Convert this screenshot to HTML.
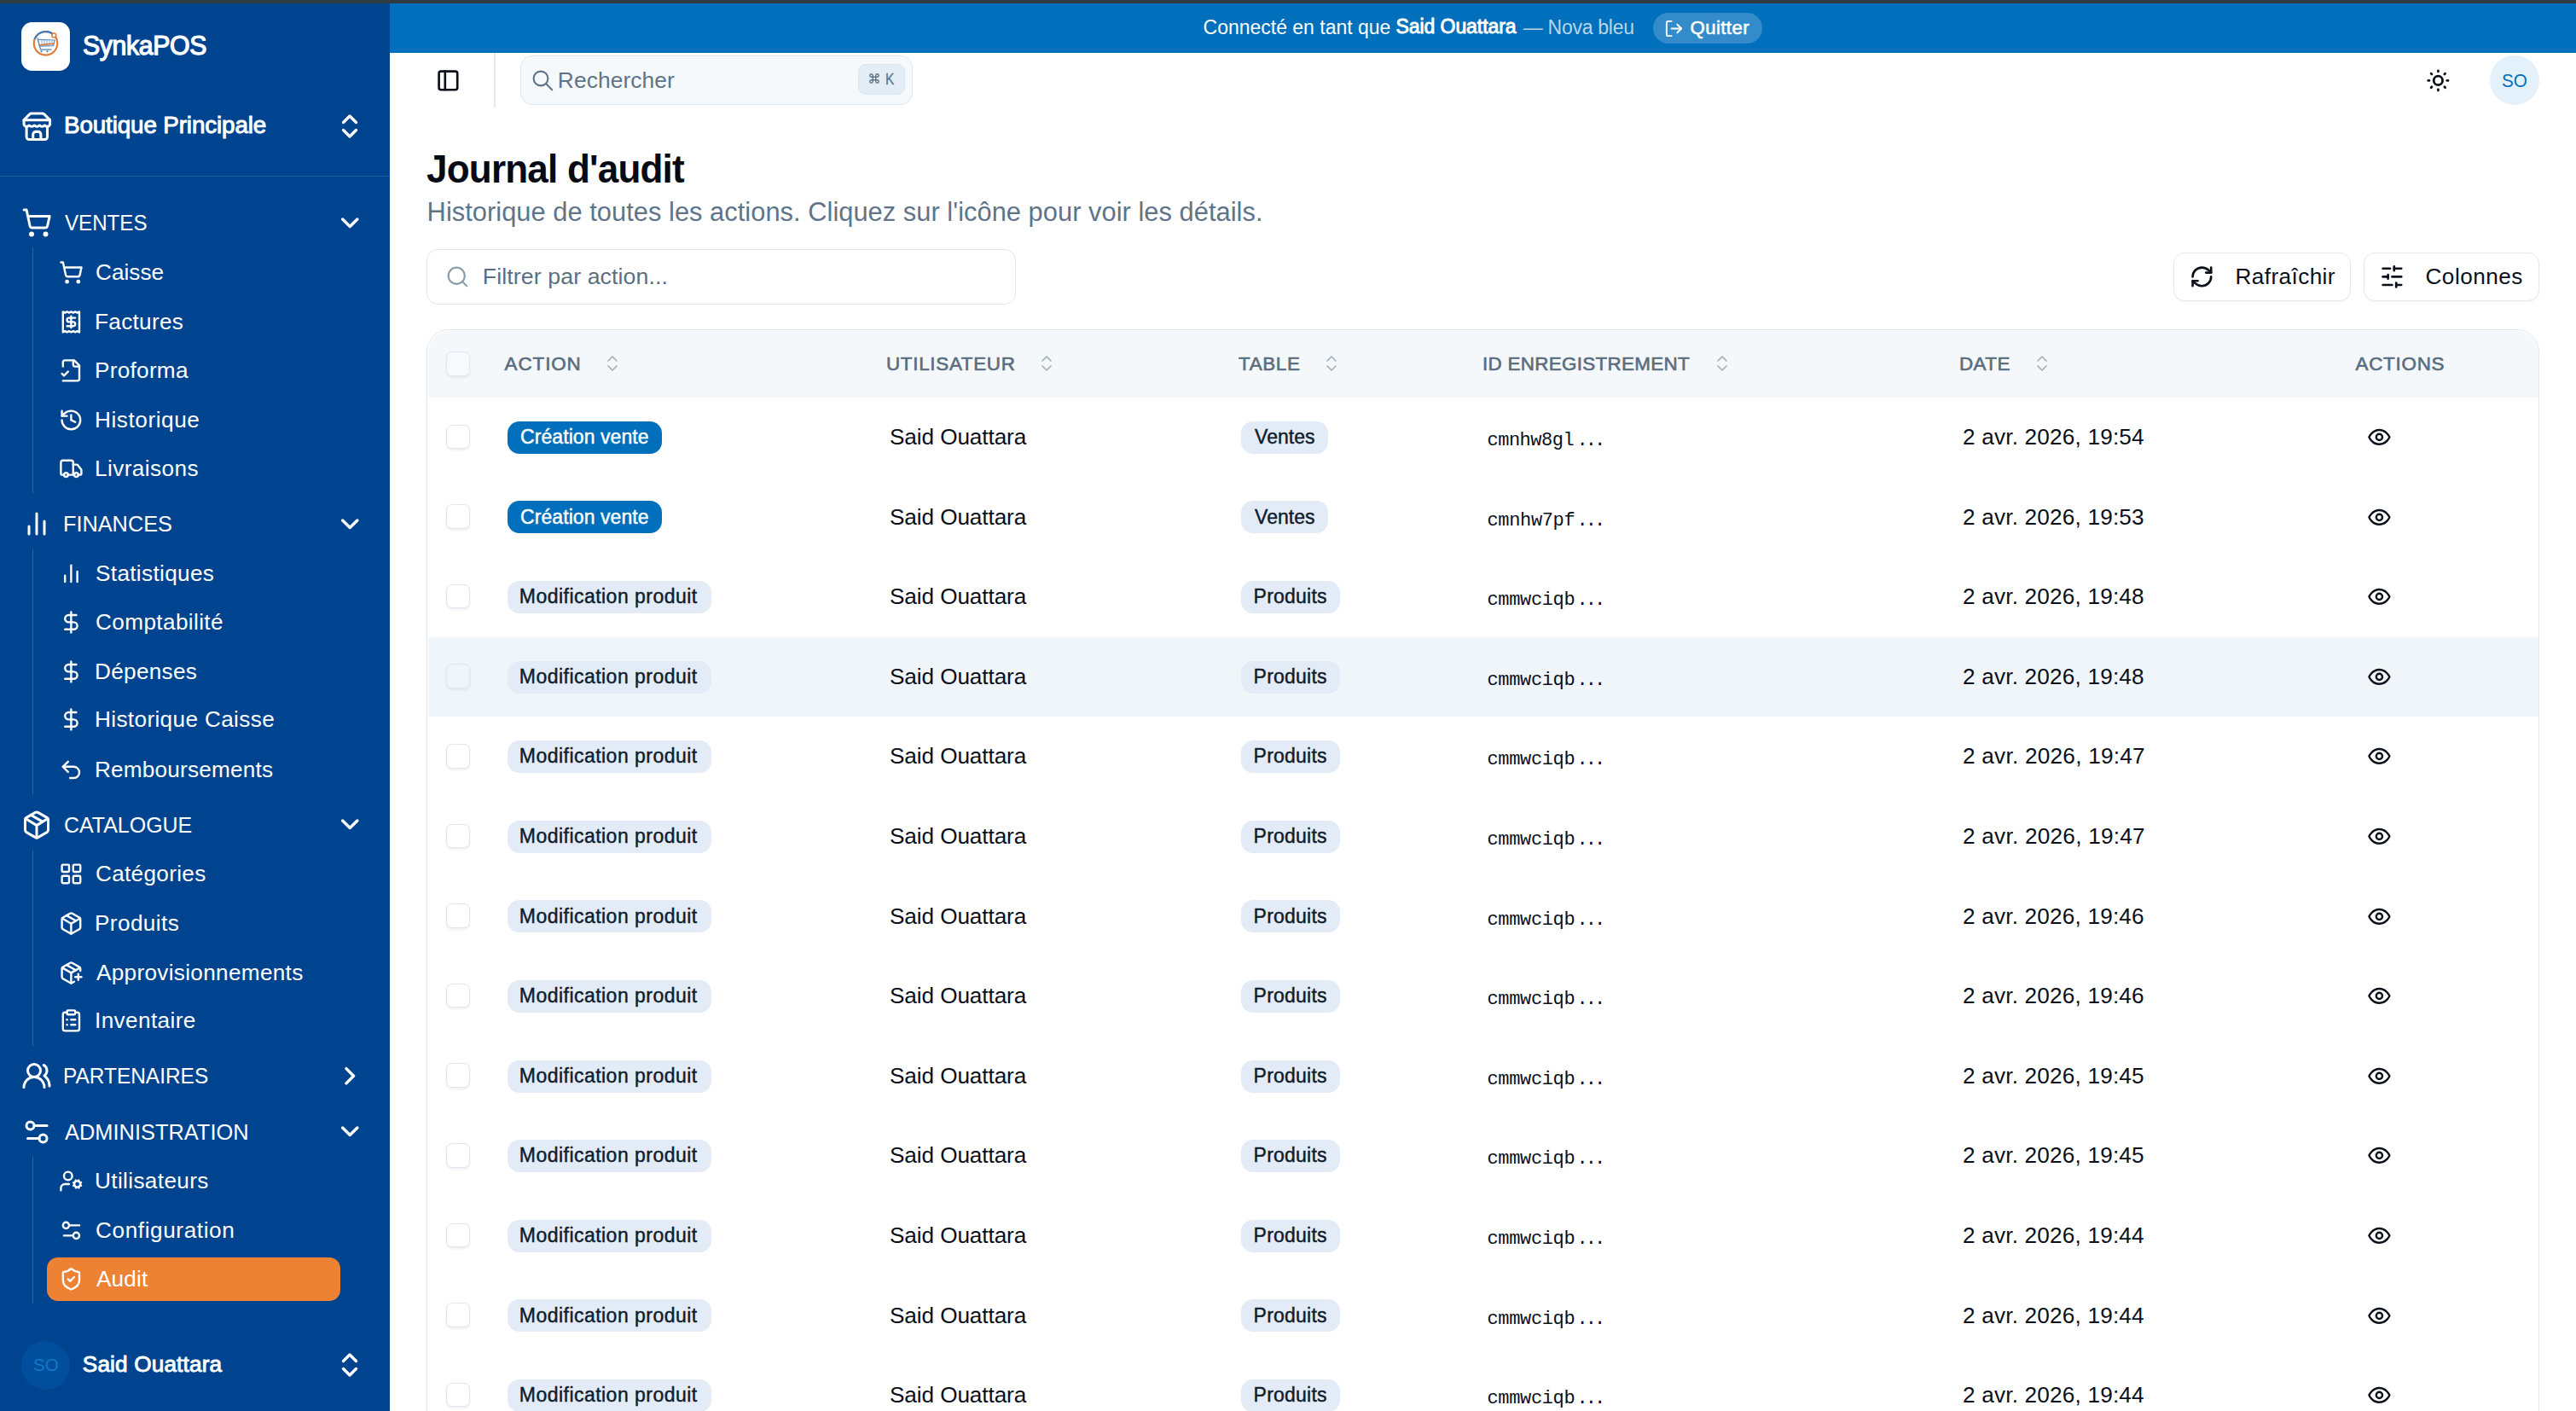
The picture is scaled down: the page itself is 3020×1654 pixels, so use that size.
<!DOCTYPE html>
<html><head><meta charset="utf-8"><title>Journal d'audit</title>
<style>
html,body{margin:0;padding:0;width:3020px;height:1654px;overflow:hidden;background:#fff;position:relative;font-family:'Liberation Sans', sans-serif}
.t{position:absolute;line-height:1;white-space:pre}
svg{display:block}
</style></head><body>
<div style="position:absolute;left:0px;top:0px;width:3020px;height:4px;background:#2e3b40"></div>
<div style="position:absolute;left:0px;top:4px;width:457px;height:1650px;background:#00448f"></div>
<div style="position:absolute;left:457px;top:4px;width:2563px;height:58px;background:#0070bc"></div>
<div style="position:absolute;left:25px;top:26px;width:57px;height:57px;background:#fff;border-radius:12.5px"></div>
<svg style="position:absolute;left:20px;top:20px" width="70" height="70" viewBox="0 0 70 70"><circle cx="33.5" cy="30.8" r="13.8" fill="none" stroke="#e27a36" stroke-width="2.1"/><path d="M20.6 26.0 A13.8 13.8 0 0 1 44.5 22.6" fill="none" stroke="#3d7bbf" stroke-width="2.1"/><circle cx="43.3" cy="21.4" r="2.4" fill="#fff" stroke="#e27a36" stroke-width="1.6"/><path d="M24 24.5 L26.5 34.5 L27.8 38.2 L40.5 38.2" fill="none" stroke="#4a82c0" stroke-width="1.3"/><path d="M25.2 26.3 L44.2 27.0 L42.6 33.6 L27 34.2" fill="none" stroke="#5b8fc9" stroke-width="1.2"/><path d="M29 27 V33.5 M32 27 V33.5 M35 27 V33.5 M38 27.2 V33.4 M41 27.3 V33.3" stroke="#7aa3d3" stroke-width="0.9"/><path d="M25.5 33.2 Q34 31.5 44 31.2" fill="none" stroke="#e07a3a" stroke-width="1.8"/><circle cx="28.5" cy="40.3" r="1.1" fill="#3d7bbf"/><circle cx="35.5" cy="40.3" r="1.1" fill="#3d7bbf"/></svg>
<svg style="position:absolute;left:24.90px;top:130.40px;" width="36.6" height="36.6" viewBox="0 0 24 24" fill="none" stroke="#fff" stroke-width="2" stroke-linecap="round" stroke-linejoin="round"><path d="m2 7 4.41-4.41A2 2 0 0 1 7.83 2h8.34a2 2 0 0 1 1.42.59L22 7"/><path d="M4 12v8a2 2 0 0 0 2 2h12a2 2 0 0 0 2-2v-8"/><path d="M15 22v-4a2 2 0 0 0-2-2h-2a2 2 0 0 0-2 2v4"/><path d="M2 7h20"/><path d="M22 7v3a2 2 0 0 1-2 2a2.7 2.7 0 0 1-1.59-.63.7.7 0 0 0-.82 0A2.7 2.7 0 0 1 16 12a2.7 2.7 0 0 1-1.59-.63.7.7 0 0 0-.82 0A2.7 2.7 0 0 1 12 12a2.7 2.7 0 0 1-1.59-.63.7.7 0 0 0-.82 0A2.7 2.7 0 0 1 8 12a2.7 2.7 0 0 1-1.59-.63.7.7 0 0 0-.82 0A2.7 2.7 0 0 1 4 12a2 2 0 0 1-2-2V7"/></svg>
<svg style="position:absolute;left:392.00px;top:130.00px;" width="36" height="36" viewBox="0 0 24 24" fill="none" stroke="#fff" stroke-width="2.25" stroke-linecap="round" stroke-linejoin="round"><path d="m7 15 5 5 5-5"/><path d="m7 9 5-5 5 5"/></svg>
<div style="position:absolute;left:0px;top:206px;width:457px;height:1px;background:rgba(255,255,255,0.13)"></div>
<svg style="position:absolute;left:25.00px;top:243.00px;" width="36" height="36" viewBox="0 0 24 24" fill="none" stroke="#fff" stroke-width="2" stroke-linecap="round" stroke-linejoin="round"><circle cx="8" cy="21" r="1"/><circle cx="19" cy="21" r="1"/><path d="M2.05 2.05h2l2.66 12.42a2 2 0 0 0 2 1.58h9.78a2 2 0 0 0 1.95-1.57l1.65-7.43H5.12"/></svg>
<svg style="position:absolute;left:392.75px;top:243.75px;" width="34.5" height="34.5" viewBox="0 0 24 24" fill="none" stroke="#fff" stroke-width="2.35" stroke-linecap="round" stroke-linejoin="round"><path d="m6 9 6 6 6-6"/></svg>
<div style="position:absolute;left:38px;top:290px;width:1px;height:288px;background:rgba(255,255,255,0.18)"></div>
<svg style="position:absolute;left:69.10px;top:305.10px;" width="28.8" height="28.8" viewBox="0 0 24 24" fill="none" stroke="#fff" stroke-width="2" stroke-linecap="round" stroke-linejoin="round"><circle cx="8" cy="21" r="1"/><circle cx="19" cy="21" r="1"/><path d="M2.05 2.05h2l2.66 12.42a2 2 0 0 0 2 1.58h9.78a2 2 0 0 0 1.95-1.57l1.65-7.43H5.12"/></svg>
<svg style="position:absolute;left:69.10px;top:362.70px;" width="28.8" height="28.8" viewBox="0 0 24 24" fill="none" stroke="#fff" stroke-width="2" stroke-linecap="round" stroke-linejoin="round"><path d="M4 2v20l2-1 2 1 2-1 2 1 2-1 2 1 2-1 2 1V2l-2 1-2-1-2 1-2-1-2 1-2-1-2 1Z"/><path d="M16 8h-6a2 2 0 1 0 0 4h4a2 2 0 1 1 0 4H8"/><path d="M12 17.5v-11"/></svg>
<svg style="position:absolute;left:69.10px;top:420.10px;" width="28.8" height="28.8" viewBox="0 0 24 24" fill="none" stroke="#fff" stroke-width="2" stroke-linecap="round" stroke-linejoin="round"><path d="M4 22h14a2 2 0 0 0 2-2V7l-5-5H6a2 2 0 0 0-2 2v4"/><path d="M14 2v4a2 2 0 0 0 2 2h4"/><path d="m3 15 2 2 4-4"/></svg>
<svg style="position:absolute;left:69.10px;top:478.10px;" width="28.8" height="28.8" viewBox="0 0 24 24" fill="none" stroke="#fff" stroke-width="2" stroke-linecap="round" stroke-linejoin="round"><path d="M3 12a9 9 0 1 0 9-9 9.75 9.75 0 0 0-6.74 2.74L3 8"/><path d="M3 3v5h5"/><path d="M12 7v5l4 2"/></svg>
<svg style="position:absolute;left:69.10px;top:535.10px;" width="28.8" height="28.8" viewBox="0 0 24 24" fill="none" stroke="#fff" stroke-width="2" stroke-linecap="round" stroke-linejoin="round"><path d="M14 18V6a2 2 0 0 0-2-2H4a2 2 0 0 0-2 2v11a1 1 0 0 0 1 1h2"/><path d="M15 18H9"/><path d="M19 18h2a1 1 0 0 0 1-1v-3.65a1 1 0 0 0-.22-.624l-3.48-4.35A1 1 0 0 0 17.52 8H14"/><circle cx="17" cy="18" r="2"/><circle cx="7" cy="18" r="2"/></svg>
<svg style="position:absolute;left:25.00px;top:595.80px;" width="36" height="36" viewBox="0 0 24 24" fill="none" stroke="#fff" stroke-width="2" stroke-linecap="round" stroke-linejoin="round"><line x1="18" x2="18" y1="20" y2="10"/><line x1="12" x2="12" y1="20" y2="4"/><line x1="6" x2="6" y1="20" y2="14"/></svg>
<svg style="position:absolute;left:392.75px;top:596.55px;" width="34.5" height="34.5" viewBox="0 0 24 24" fill="none" stroke="#fff" stroke-width="2.35" stroke-linecap="round" stroke-linejoin="round"><path d="m6 9 6 6 6-6"/></svg>
<div style="position:absolute;left:38px;top:644px;width:1px;height:287px;background:rgba(255,255,255,0.18)"></div>
<svg style="position:absolute;left:69.10px;top:657.60px;" width="28.8" height="28.8" viewBox="0 0 24 24" fill="none" stroke="#fff" stroke-width="2" stroke-linecap="round" stroke-linejoin="round"><line x1="18" x2="18" y1="20" y2="10"/><line x1="12" x2="12" y1="20" y2="4"/><line x1="6" x2="6" y1="20" y2="14"/></svg>
<svg style="position:absolute;left:69.10px;top:715.10px;" width="28.8" height="28.8" viewBox="0 0 24 24" fill="none" stroke="#fff" stroke-width="2" stroke-linecap="round" stroke-linejoin="round"><line x1="12" x2="12" y1="2" y2="22"/><path d="M17 5H9.5a3.5 3.5 0 0 0 0 7h5a3.5 3.5 0 0 1 0 7H6"/></svg>
<svg style="position:absolute;left:69.10px;top:773.10px;" width="28.8" height="28.8" viewBox="0 0 24 24" fill="none" stroke="#fff" stroke-width="2" stroke-linecap="round" stroke-linejoin="round"><line x1="12" x2="12" y1="2" y2="22"/><path d="M17 5H9.5a3.5 3.5 0 0 0 0 7h5a3.5 3.5 0 0 1 0 7H6"/></svg>
<svg style="position:absolute;left:69.10px;top:829.10px;" width="28.8" height="28.8" viewBox="0 0 24 24" fill="none" stroke="#fff" stroke-width="2" stroke-linecap="round" stroke-linejoin="round"><line x1="12" x2="12" y1="2" y2="22"/><path d="M17 5H9.5a3.5 3.5 0 0 0 0 7h5a3.5 3.5 0 0 1 0 7H6"/></svg>
<svg style="position:absolute;left:69.10px;top:887.60px;" width="28.8" height="28.8" viewBox="0 0 24 24" fill="none" stroke="#fff" stroke-width="2" stroke-linecap="round" stroke-linejoin="round"><path d="M9 14 4 9l5-5"/><path d="M4 9h10.5a5.5 5.5 0 0 1 5.5 5.5a5.5 5.5 0 0 1-5.5 5.5H11"/></svg>
<svg style="position:absolute;left:25.00px;top:948.70px;" width="36" height="36" viewBox="0 0 24 24" fill="none" stroke="#fff" stroke-width="2" stroke-linecap="round" stroke-linejoin="round"><path d="M11 21.73a2 2 0 0 0 2 0l7-4A2 2 0 0 0 21 16V8a2 2 0 0 0-1-1.73l-7-4a2 2 0 0 0-2 0l-7 4A2 2 0 0 0 3 8v8a2 2 0 0 0 1 1.73z"/><path d="M12 22V12"/><path d="m3.3 7 7.703 4.734a2 2 0 0 0 1.994 0L20.7 7"/><path d="m7.5 4.27 9 5.15"/></svg>
<svg style="position:absolute;left:392.75px;top:949.45px;" width="34.5" height="34.5" viewBox="0 0 24 24" fill="none" stroke="#fff" stroke-width="2.35" stroke-linecap="round" stroke-linejoin="round"><path d="m6 9 6 6 6-6"/></svg>
<div style="position:absolute;left:38px;top:997px;width:1px;height:229px;background:rgba(255,255,255,0.18)"></div>
<svg style="position:absolute;left:69.10px;top:1010.10px;" width="28.8" height="28.8" viewBox="0 0 24 24" fill="none" stroke="#fff" stroke-width="2" stroke-linecap="round" stroke-linejoin="round"><rect width="7" height="7" x="3" y="3" rx="1"/><rect width="7" height="7" x="14" y="3" rx="1"/><rect width="7" height="7" x="14" y="14" rx="1"/><rect width="7" height="7" x="3" y="14" rx="1"/></svg>
<svg style="position:absolute;left:69.10px;top:1067.60px;" width="28.8" height="28.8" viewBox="0 0 24 24" fill="none" stroke="#fff" stroke-width="2" stroke-linecap="round" stroke-linejoin="round"><path d="M11 21.73a2 2 0 0 0 2 0l7-4A2 2 0 0 0 21 16V8a2 2 0 0 0-1-1.73l-7-4a2 2 0 0 0-2 0l-7 4A2 2 0 0 0 3 8v8a2 2 0 0 0 1 1.73z"/><path d="M12 22V12"/><path d="m3.3 7 7.703 4.734a2 2 0 0 0 1.994 0L20.7 7"/><path d="m7.5 4.27 9 5.15"/></svg>
<svg style="position:absolute;left:69.10px;top:1125.80px;" width="28.8" height="28.8" viewBox="0 0 24 24" fill="none" stroke="#fff" stroke-width="2" stroke-linecap="round" stroke-linejoin="round"><path d="M16 16h6"/><path d="M19 13v6"/><path d="M21 10V8a2 2 0 0 0-1-1.73l-7-4a2 2 0 0 0-2 0l-7 4A2 2 0 0 0 3 8v8a2 2 0 0 0 1 1.73l7 4a2 2 0 0 0 2 0l2-1.14"/><path d="m7.5 4.27 9 5.15"/><polyline points="3.29 7 12 12 20.71 7"/><line x1="12" x2="12" y1="22" y2="12"/></svg>
<svg style="position:absolute;left:69.10px;top:1182.10px;" width="28.8" height="28.8" viewBox="0 0 24 24" fill="none" stroke="#fff" stroke-width="2" stroke-linecap="round" stroke-linejoin="round"><rect width="8" height="4" x="8" y="2" rx="1" ry="1"/><path d="M16 4h2a2 2 0 0 1 2 2v14a2 2 0 0 1-2 2H6a2 2 0 0 1-2-2V6a2 2 0 0 1 2-2h2"/><path d="M12 11h4"/><path d="M12 16h4"/><path d="M8 11h.01"/><path d="M8 16h.01"/></svg>
<svg style="position:absolute;left:25.00px;top:1243.00px;" width="36" height="36" viewBox="0 0 24 24" fill="none" stroke="#fff" stroke-width="2" stroke-linecap="round" stroke-linejoin="round"><path d="M18 21a8 8 0 0 0-16 0"/><circle cx="10" cy="8" r="5"/><path d="M22 20c0-3.37-2-6.5-4-8a5 5 0 0 0-.45-8.3"/></svg>
<svg style="position:absolute;left:392.75px;top:1243.75px;" width="34.5" height="34.5" viewBox="0 0 24 24" fill="none" stroke="#fff" stroke-width="2.35" stroke-linecap="round" stroke-linejoin="round"><path d="m9 18 6-6-6-6"/></svg>
<svg style="position:absolute;left:25.00px;top:1308.70px;" width="36" height="36" viewBox="0 0 24 24" fill="none" stroke="#fff" stroke-width="2" stroke-linecap="round" stroke-linejoin="round"><path d="M20 7h-9"/><path d="M14 17H5"/><circle cx="17" cy="17" r="3"/><circle cx="7" cy="7" r="3"/></svg>
<svg style="position:absolute;left:392.75px;top:1309.45px;" width="34.5" height="34.5" viewBox="0 0 24 24" fill="none" stroke="#fff" stroke-width="2.35" stroke-linecap="round" stroke-linejoin="round"><path d="m6 9 6 6 6-6"/></svg>
<div style="position:absolute;left:38px;top:1356px;width:1px;height:172px;background:rgba(255,255,255,0.18)"></div>
<svg style="position:absolute;left:69.10px;top:1369.80px;" width="28.8" height="28.8" viewBox="0 0 24 24" fill="none" stroke="#fff" stroke-width="2" stroke-linecap="round" stroke-linejoin="round"><circle cx="18" cy="15" r="3"/><circle cx="9" cy="7" r="4"/><path d="M10 15H6a4 4 0 0 0-4 4v2"/><path d="m21.7 16.4-.9-.3"/><path d="m15.2 13.9-.9-.3"/><path d="m16.6 18.7.3-.9"/><path d="m19.1 12.2.3-.9"/><path d="m19.6 18.7-.4-1"/><path d="m16.8 12.3-.4-1"/><path d="m14.3 16.6 1-.4"/><path d="m20.7 13.8 1-.4"/></svg>
<svg style="position:absolute;left:69.10px;top:1428.10px;" width="28.8" height="28.8" viewBox="0 0 24 24" fill="none" stroke="#fff" stroke-width="2" stroke-linecap="round" stroke-linejoin="round"><path d="M20 7h-9"/><path d="M14 17H5"/><circle cx="17" cy="17" r="3"/><circle cx="7" cy="7" r="3"/></svg>
<div style="position:absolute;left:55px;top:1474px;width:344px;height:51px;background:#ee8234;border-radius:13px"></div>
<svg style="position:absolute;left:69.10px;top:1484.60px;" width="28.8" height="28.8" viewBox="0 0 24 24" fill="none" stroke="#fff" stroke-width="2" stroke-linecap="round" stroke-linejoin="round"><path d="M20 13c0 5-3.5 7.5-7.66 8.95a1 1 0 0 1-.67-.01C7.5 20.5 4 18 4 13V6a1 1 0 0 1 1-1c2 0 4.5-1.2 6.24-2.72a1.17 1.17 0 0 1 1.52 0C14.51 3.81 17 5 19 5a1 1 0 0 1 1 1z"/><path d="m9 12 2 2 4-4"/></svg>
<div style="position:absolute;left:25px;top:1572px;width:56.5px;height:56.5px;background:#004e9c;border-radius:50%"></div>
<svg style="position:absolute;left:392.00px;top:1582.00px;" width="36" height="36" viewBox="0 0 24 24" fill="none" stroke="#fff" stroke-width="2.25" stroke-linecap="round" stroke-linejoin="round"><path d="m7 15 5 5 5-5"/><path d="m7 9 5-5 5 5"/></svg>
<svg style="position:absolute;left:510.60px;top:79.60px;" width="28.8" height="28.8" viewBox="0 0 24 24" fill="none" stroke="#0a0f1a" stroke-width="2.2" stroke-linecap="round" stroke-linejoin="round"><rect width="18" height="18" x="3" y="3" rx="2"/><path d="M9 3v18"/></svg>
<div style="position:absolute;left:579px;top:62px;width:2px;height:64px;background:#e3e8ee"></div>
<div style="position:absolute;left:610px;top:65px;width:460px;height:58px;background:#f6f9fc;border:1px solid #dfe6ee;border-radius:14px;box-sizing:border-box"></div>
<svg style="position:absolute;left:622.10px;top:79.60px;" width="28.8" height="28.8" viewBox="0 0 24 24" fill="none" stroke="#5f7488" stroke-width="1.75" stroke-linecap="round" stroke-linejoin="round"><circle cx="10" cy="10" r="7"/><path d="m21 21-6-6"/></svg>
<div style="position:absolute;left:1006px;top:75px;width:54.5px;height:35.5px;background:#e3edf6;border:1px solid #dbe4ec;border-radius:9px;box-sizing:border-box"></div>
<svg style="position:absolute;left:1017.65px;top:84.85px;" width="14" height="14" viewBox="0 0 24 24" fill="none" stroke="#5f7386" stroke-width="2.3" stroke-linecap="round" stroke-linejoin="round"><path d="M15 6v12a3 3 0 1 0 3-3H6a3 3 0 1 0 3 3V6a3 3 0 1 0-3 3h12a3 3 0 1 0-3-3"/></svg>
<svg style="position:absolute;left:2844.10px;top:79.60px;" width="28.8" height="28.8" viewBox="0 0 24 24" fill="none" stroke="#0a0f1a" stroke-width="2.3" stroke-linecap="round" stroke-linejoin="round"><circle cx="12" cy="12" r="4.3"/><path d="M12 2.3v1"/><path d="M12 20.7v1"/><path d="m5.1 5.1.7.7"/><path d="m18.2 18.2.7.7"/><path d="M2.3 12h1"/><path d="M20.7 12h1"/><path d="m5.8 18.2-.7.7"/><path d="m18.9 5.1-.7.7"/></svg>
<div style="position:absolute;left:2919px;top:65px;width:58px;height:58px;background:#e4f0fa;border-radius:50%"></div>
<div style="position:absolute;left:500.3px;top:292.3px;width:690.7px;height:64.39999999999998px;background:#fff;border:1.5px solid #dfe6ee;border-radius:13px;box-sizing:border-box"></div>
<svg style="position:absolute;left:522.10px;top:309.80px;" width="28.8" height="28.8" viewBox="0 0 24 24" fill="none" stroke="#8c9ca9" stroke-width="1.8" stroke-linecap="round" stroke-linejoin="round"><circle cx="11" cy="11" r="8"/><path d="m21 21-4.3-4.3"/></svg>
<div style="position:absolute;left:2548px;top:296px;width:208px;height:57px;background:#fff;border:1.5px solid #e3e9ef;border-radius:13px;box-sizing:border-box;box-shadow:0 1px 2px rgba(16,24,40,0.05)"></div>
<svg style="position:absolute;left:2567.10px;top:309.60px;" width="28.8" height="28.8" viewBox="0 0 24 24" fill="none" stroke="#0a0f1a" stroke-width="2.2" stroke-linecap="round" stroke-linejoin="round"><path d="M3 12a9 9 0 0 1 9-9 9.75 9.75 0 0 1 6.74 2.74L21 8"/><path d="M21 3v5h-5"/><path d="M21 12a9 9 0 0 1-9 9 9.75 9.75 0 0 1-6.74-2.74L3 16"/><path d="M8 16H3v5"/></svg>
<div style="position:absolute;left:2771px;top:296px;width:206px;height:57px;background:#fff;border:1.5px solid #e3e9ef;border-radius:13px;box-sizing:border-box;box-shadow:0 1px 2px rgba(16,24,40,0.05)"></div>
<svg style="position:absolute;left:2790.10px;top:309.60px;" width="28.8" height="28.8" viewBox="0 0 24 24" fill="none" stroke="#0a0f1a" stroke-width="2.2" stroke-linecap="round" stroke-linejoin="round"><line x1="21" x2="14" y1="4" y2="4"/><line x1="10" x2="3" y1="4" y2="4"/><line x1="21" x2="12" y1="12" y2="12"/><line x1="8" x2="3" y1="12" y2="12"/><line x1="21" x2="16" y1="20" y2="20"/><line x1="12" x2="3" y1="20" y2="20"/><line x1="14" x2="14" y1="2" y2="6"/><line x1="8" x2="8" y1="10" y2="14"/><line x1="16" x2="16" y1="18" y2="22"/></svg>
<div style="position:absolute;left:500px;top:386px;width:2477px;height:1314px;background:#fff;border:1.5px solid #e2e8ef;border-radius:26px;box-sizing:border-box;overflow:hidden"></div>
<div style="position:absolute;left:501.5px;top:387.5px;width:2474.0px;height:78.5px;background:#f5f8fb;border-radius:25px 25px 0 0"></div>
<div style="position:absolute;left:523.4px;top:412.4px;width:27.200000000000045px;height:28.600000000000023px;background:#f7fafc;border:1.5px solid #e3e8ee;border-radius:7px;box-sizing:border-box;box-shadow:0 1.5px 3px rgba(16,24,40,0.07)"></div>
<svg style="position:absolute;left:705.60px;top:414.40px;" width="24" height="24" viewBox="0 0 24 24" fill="none" stroke="#a3b0bc" stroke-width="1.75" stroke-linecap="round" stroke-linejoin="round"><path d="m7 15 5 5 5-5"/><path d="m7 9 5-5 5 5"/></svg>
<svg style="position:absolute;left:1214.90px;top:414.40px;" width="24" height="24" viewBox="0 0 24 24" fill="none" stroke="#a3b0bc" stroke-width="1.75" stroke-linecap="round" stroke-linejoin="round"><path d="m7 15 5 5 5-5"/><path d="m7 9 5-5 5 5"/></svg>
<svg style="position:absolute;left:1548.90px;top:414.40px;" width="24" height="24" viewBox="0 0 24 24" fill="none" stroke="#a3b0bc" stroke-width="1.75" stroke-linecap="round" stroke-linejoin="round"><path d="m7 15 5 5 5-5"/><path d="m7 9 5-5 5 5"/></svg>
<svg style="position:absolute;left:2007.40px;top:414.40px;" width="24" height="24" viewBox="0 0 24 24" fill="none" stroke="#a3b0bc" stroke-width="1.75" stroke-linecap="round" stroke-linejoin="round"><path d="m7 15 5 5 5-5"/><path d="m7 9 5-5 5 5"/></svg>
<svg style="position:absolute;left:2382.40px;top:414.40px;" width="24" height="24" viewBox="0 0 24 24" fill="none" stroke="#a3b0bc" stroke-width="1.75" stroke-linecap="round" stroke-linejoin="round"><path d="m7 15 5 5 5-5"/><path d="m7 9 5-5 5 5"/></svg>
<div style="position:absolute;left:523.4px;top:497.59999999999997px;width:27.200000000000045px;height:28.599999999999966px;background:#fff;border:1.5px solid #e0e6ed;border-radius:7px;box-sizing:border-box;box-shadow:0 1.5px 3px rgba(16,24,40,0.07)"></div>
<div style="position:absolute;left:595px;top:493.79999999999995px;width:181px;height:38.0px;background:#0070bc;border-radius:14px"></div>
<div style="position:absolute;left:1455px;top:493.79999999999995px;width:102px;height:38.0px;background:#e3ecf6;border-radius:14px"></div>
<svg style="position:absolute;left:2775.10px;top:497.90px;" width="28.8" height="28.8" viewBox="0 0 24 24" fill="none" stroke="#0a0f1a" stroke-width="2" stroke-linecap="round" stroke-linejoin="round"><path d="M2 12s3-7 10-7 10 7 10 7-3 7-10 7-10-7-10-7Z"/><circle cx="12" cy="12" r="3"/></svg>
<div style="position:absolute;left:523.4px;top:591.1999999999999px;width:27.200000000000045px;height:28.600000000000023px;background:#fff;border:1.5px solid #e0e6ed;border-radius:7px;box-sizing:border-box;box-shadow:0 1.5px 3px rgba(16,24,40,0.07)"></div>
<div style="position:absolute;left:595px;top:587.4px;width:181px;height:38.0px;background:#0070bc;border-radius:14px"></div>
<div style="position:absolute;left:1455px;top:587.4px;width:102px;height:38.0px;background:#e3ecf6;border-radius:14px"></div>
<svg style="position:absolute;left:2775.10px;top:591.50px;" width="28.8" height="28.8" viewBox="0 0 24 24" fill="none" stroke="#0a0f1a" stroke-width="2" stroke-linecap="round" stroke-linejoin="round"><path d="M2 12s3-7 10-7 10 7 10 7-3 7-10 7-10-7-10-7Z"/><circle cx="12" cy="12" r="3"/></svg>
<div style="position:absolute;left:523.4px;top:684.8px;width:27.200000000000045px;height:28.600000000000023px;background:#fff;border:1.5px solid #e0e6ed;border-radius:7px;box-sizing:border-box;box-shadow:0 1.5px 3px rgba(16,24,40,0.07)"></div>
<div style="position:absolute;left:595px;top:681.0px;width:239px;height:38.0px;background:#e3ecf6;border-radius:14px"></div>
<div style="position:absolute;left:1455px;top:681.0px;width:116px;height:38.0px;background:#e3ecf6;border-radius:14px"></div>
<svg style="position:absolute;left:2775.10px;top:685.10px;" width="28.8" height="28.8" viewBox="0 0 24 24" fill="none" stroke="#0a0f1a" stroke-width="2" stroke-linecap="round" stroke-linejoin="round"><path d="M2 12s3-7 10-7 10 7 10 7-3 7-10 7-10-7-10-7Z"/><circle cx="12" cy="12" r="3"/></svg>
<div style="position:absolute;left:501.5px;top:746.8px;width:2474.0px;height:93.60000000000002px;background:#f0f5fa"></div>
<div style="position:absolute;left:523.4px;top:778.3999999999999px;width:27.200000000000045px;height:28.600000000000023px;background:transparent;border:1.5px solid #e0e6ed;border-radius:7px;box-sizing:border-box;box-shadow:0 1.5px 3px rgba(16,24,40,0.07)"></div>
<div style="position:absolute;left:595px;top:774.5999999999999px;width:239px;height:38.0px;background:#e3ecf6;border-radius:14px"></div>
<div style="position:absolute;left:1455px;top:774.5999999999999px;width:116px;height:38.0px;background:#e3ecf6;border-radius:14px"></div>
<svg style="position:absolute;left:2775.10px;top:778.70px;" width="28.8" height="28.8" viewBox="0 0 24 24" fill="none" stroke="#0a0f1a" stroke-width="2" stroke-linecap="round" stroke-linejoin="round"><path d="M2 12s3-7 10-7 10 7 10 7-3 7-10 7-10-7-10-7Z"/><circle cx="12" cy="12" r="3"/></svg>
<div style="position:absolute;left:523.4px;top:871.9999999999999px;width:27.200000000000045px;height:28.600000000000023px;background:#fff;border:1.5px solid #e0e6ed;border-radius:7px;box-sizing:border-box;box-shadow:0 1.5px 3px rgba(16,24,40,0.07)"></div>
<div style="position:absolute;left:595px;top:868.1999999999999px;width:239px;height:38.0px;background:#e3ecf6;border-radius:14px"></div>
<div style="position:absolute;left:1455px;top:868.1999999999999px;width:116px;height:38.0px;background:#e3ecf6;border-radius:14px"></div>
<svg style="position:absolute;left:2775.10px;top:872.30px;" width="28.8" height="28.8" viewBox="0 0 24 24" fill="none" stroke="#0a0f1a" stroke-width="2" stroke-linecap="round" stroke-linejoin="round"><path d="M2 12s3-7 10-7 10 7 10 7-3 7-10 7-10-7-10-7Z"/><circle cx="12" cy="12" r="3"/></svg>
<div style="position:absolute;left:523.4px;top:965.5999999999999px;width:27.200000000000045px;height:28.600000000000023px;background:#fff;border:1.5px solid #e0e6ed;border-radius:7px;box-sizing:border-box;box-shadow:0 1.5px 3px rgba(16,24,40,0.07)"></div>
<div style="position:absolute;left:595px;top:961.8px;width:239px;height:38.0px;background:#e3ecf6;border-radius:14px"></div>
<div style="position:absolute;left:1455px;top:961.8px;width:116px;height:38.0px;background:#e3ecf6;border-radius:14px"></div>
<svg style="position:absolute;left:2775.10px;top:965.90px;" width="28.8" height="28.8" viewBox="0 0 24 24" fill="none" stroke="#0a0f1a" stroke-width="2" stroke-linecap="round" stroke-linejoin="round"><path d="M2 12s3-7 10-7 10 7 10 7-3 7-10 7-10-7-10-7Z"/><circle cx="12" cy="12" r="3"/></svg>
<div style="position:absolute;left:523.4px;top:1059.1999999999998px;width:27.200000000000045px;height:28.600000000000136px;background:#fff;border:1.5px solid #e0e6ed;border-radius:7px;box-sizing:border-box;box-shadow:0 1.5px 3px rgba(16,24,40,0.07)"></div>
<div style="position:absolute;left:595px;top:1055.3999999999999px;width:239px;height:38.0px;background:#e3ecf6;border-radius:14px"></div>
<div style="position:absolute;left:1455px;top:1055.3999999999999px;width:116px;height:38.0px;background:#e3ecf6;border-radius:14px"></div>
<svg style="position:absolute;left:2775.10px;top:1059.50px;" width="28.8" height="28.8" viewBox="0 0 24 24" fill="none" stroke="#0a0f1a" stroke-width="2" stroke-linecap="round" stroke-linejoin="round"><path d="M2 12s3-7 10-7 10 7 10 7-3 7-10 7-10-7-10-7Z"/><circle cx="12" cy="12" r="3"/></svg>
<div style="position:absolute;left:523.4px;top:1152.7999999999997px;width:27.200000000000045px;height:28.600000000000136px;background:#fff;border:1.5px solid #e0e6ed;border-radius:7px;box-sizing:border-box;box-shadow:0 1.5px 3px rgba(16,24,40,0.07)"></div>
<div style="position:absolute;left:595px;top:1148.9999999999998px;width:239px;height:38.0px;background:#e3ecf6;border-radius:14px"></div>
<div style="position:absolute;left:1455px;top:1148.9999999999998px;width:116px;height:38.0px;background:#e3ecf6;border-radius:14px"></div>
<svg style="position:absolute;left:2775.10px;top:1153.10px;" width="28.8" height="28.8" viewBox="0 0 24 24" fill="none" stroke="#0a0f1a" stroke-width="2" stroke-linecap="round" stroke-linejoin="round"><path d="M2 12s3-7 10-7 10 7 10 7-3 7-10 7-10-7-10-7Z"/><circle cx="12" cy="12" r="3"/></svg>
<div style="position:absolute;left:523.4px;top:1246.3999999999999px;width:27.200000000000045px;height:28.600000000000136px;background:#fff;border:1.5px solid #e0e6ed;border-radius:7px;box-sizing:border-box;box-shadow:0 1.5px 3px rgba(16,24,40,0.07)"></div>
<div style="position:absolute;left:595px;top:1242.6px;width:239px;height:38.0px;background:#e3ecf6;border-radius:14px"></div>
<div style="position:absolute;left:1455px;top:1242.6px;width:116px;height:38.0px;background:#e3ecf6;border-radius:14px"></div>
<svg style="position:absolute;left:2775.10px;top:1246.70px;" width="28.8" height="28.8" viewBox="0 0 24 24" fill="none" stroke="#0a0f1a" stroke-width="2" stroke-linecap="round" stroke-linejoin="round"><path d="M2 12s3-7 10-7 10 7 10 7-3 7-10 7-10-7-10-7Z"/><circle cx="12" cy="12" r="3"/></svg>
<div style="position:absolute;left:523.4px;top:1340.0px;width:27.200000000000045px;height:28.600000000000136px;background:#fff;border:1.5px solid #e0e6ed;border-radius:7px;box-sizing:border-box;box-shadow:0 1.5px 3px rgba(16,24,40,0.07)"></div>
<div style="position:absolute;left:595px;top:1336.2px;width:239px;height:38.0px;background:#e3ecf6;border-radius:14px"></div>
<div style="position:absolute;left:1455px;top:1336.2px;width:116px;height:38.0px;background:#e3ecf6;border-radius:14px"></div>
<svg style="position:absolute;left:2775.10px;top:1340.30px;" width="28.8" height="28.8" viewBox="0 0 24 24" fill="none" stroke="#0a0f1a" stroke-width="2" stroke-linecap="round" stroke-linejoin="round"><path d="M2 12s3-7 10-7 10 7 10 7-3 7-10 7-10-7-10-7Z"/><circle cx="12" cy="12" r="3"/></svg>
<div style="position:absolute;left:523.4px;top:1433.6px;width:27.200000000000045px;height:28.600000000000136px;background:#fff;border:1.5px solid #e0e6ed;border-radius:7px;box-sizing:border-box;box-shadow:0 1.5px 3px rgba(16,24,40,0.07)"></div>
<div style="position:absolute;left:595px;top:1429.8px;width:239px;height:38.0px;background:#e3ecf6;border-radius:14px"></div>
<div style="position:absolute;left:1455px;top:1429.8px;width:116px;height:38.0px;background:#e3ecf6;border-radius:14px"></div>
<svg style="position:absolute;left:2775.10px;top:1433.90px;" width="28.8" height="28.8" viewBox="0 0 24 24" fill="none" stroke="#0a0f1a" stroke-width="2" stroke-linecap="round" stroke-linejoin="round"><path d="M2 12s3-7 10-7 10 7 10 7-3 7-10 7-10-7-10-7Z"/><circle cx="12" cy="12" r="3"/></svg>
<div style="position:absolute;left:523.4px;top:1527.1999999999998px;width:27.200000000000045px;height:28.600000000000136px;background:#fff;border:1.5px solid #e0e6ed;border-radius:7px;box-sizing:border-box;box-shadow:0 1.5px 3px rgba(16,24,40,0.07)"></div>
<div style="position:absolute;left:595px;top:1523.3999999999999px;width:239px;height:38.0px;background:#e3ecf6;border-radius:14px"></div>
<div style="position:absolute;left:1455px;top:1523.3999999999999px;width:116px;height:38.0px;background:#e3ecf6;border-radius:14px"></div>
<svg style="position:absolute;left:2775.10px;top:1527.50px;" width="28.8" height="28.8" viewBox="0 0 24 24" fill="none" stroke="#0a0f1a" stroke-width="2" stroke-linecap="round" stroke-linejoin="round"><path d="M2 12s3-7 10-7 10 7 10 7-3 7-10 7-10-7-10-7Z"/><circle cx="12" cy="12" r="3"/></svg>
<div style="position:absolute;left:523.4px;top:1620.7999999999997px;width:27.200000000000045px;height:28.600000000000136px;background:#fff;border:1.5px solid #e0e6ed;border-radius:7px;box-sizing:border-box;box-shadow:0 1.5px 3px rgba(16,24,40,0.07)"></div>
<div style="position:absolute;left:595px;top:1616.9999999999998px;width:239px;height:38.0px;background:#e3ecf6;border-radius:14px"></div>
<div style="position:absolute;left:1455px;top:1616.9999999999998px;width:116px;height:38.0px;background:#e3ecf6;border-radius:14px"></div>
<svg style="position:absolute;left:2775.10px;top:1621.10px;" width="28.8" height="28.8" viewBox="0 0 24 24" fill="none" stroke="#0a0f1a" stroke-width="2" stroke-linecap="round" stroke-linejoin="round"><path d="M2 12s3-7 10-7 10 7 10 7-3 7-10 7-10-7-10-7Z"/><circle cx="12" cy="12" r="3"/></svg>
<div style="position:absolute;left:1938px;top:15px;width:128px;height:36px;background:rgba(255,255,255,0.2);border-radius:18px"></div>
<svg style="position:absolute;left:1951.00px;top:21.50px;" width="23" height="23" viewBox="0 0 24 24" fill="none" stroke="#fff" stroke-width="2" stroke-linecap="round" stroke-linejoin="round"><path d="M9 21H5a2 2 0 0 1-2-2V5a2 2 0 0 1 2-2h4"/><polyline points="16 17 21 12 16 7"/><line x1="21" x2="9" y1="12" y2="12"/></svg>
<span class="t" style="left:96.72px;top:39.40px;font-family:'Liberation Sans', sans-serif;font-size:30.8px;font-weight:400;color:#fff;letter-spacing:-0.385px;transform:scaleX(0.9822);transform-origin:0 0;-webkit-text-stroke:1.25px #fff">SynkaPOS</span>
<span class="t" style="left:75.12px;top:131.90px;font-family:'Liberation Sans', sans-serif;font-size:28.2px;font-weight:400;color:#fff;letter-spacing:-0.157px;transform:scaleX(0.9883);transform-origin:0 0;-webkit-text-stroke:0.95px #fff">Boutique Principale</span>
<span class="t" style="left:76.00px;top:248.00px;font-family:'Liberation Sans', sans-serif;font-size:26.4px;font-weight:400;color:#fff;letter-spacing:0.000px;transform:scaleX(0.9143);transform-origin:0 0;">VENTES</span>
<span class="t" style="left:112.00px;top:306.00px;font-family:'Liberation Sans', sans-serif;font-size:26.2px;font-weight:400;color:#fff;letter-spacing:0.000px;">Caisse</span>
<span class="t" style="left:111.00px;top:363.60px;font-family:'Liberation Sans', sans-serif;font-size:26.2px;font-weight:400;color:#fff;letter-spacing:0.286px;">Factures</span>
<span class="t" style="left:111.00px;top:421.00px;font-family:'Liberation Sans', sans-serif;font-size:26.2px;font-weight:400;color:#fff;letter-spacing:0.257px;">Proforma</span>
<span class="t" style="left:111.00px;top:479.00px;font-family:'Liberation Sans', sans-serif;font-size:26.2px;font-weight:400;color:#fff;letter-spacing:0.556px;">Historique</span>
<span class="t" style="left:111.00px;top:536.00px;font-family:'Liberation Sans', sans-serif;font-size:26.2px;font-weight:400;color:#fff;letter-spacing:0.400px;">Livraisons</span>
<span class="t" style="left:74.08px;top:600.80px;font-family:'Liberation Sans', sans-serif;font-size:26.4px;font-weight:400;color:#fff;letter-spacing:0.000px;transform:scaleX(0.9585);transform-origin:0 0;">FINANCES</span>
<span class="t" style="left:112.00px;top:658.50px;font-family:'Liberation Sans', sans-serif;font-size:26.2px;font-weight:400;color:#fff;letter-spacing:0.318px;">Statistiques</span>
<span class="t" style="left:112.00px;top:716.00px;font-family:'Liberation Sans', sans-serif;font-size:26.2px;font-weight:400;color:#fff;letter-spacing:0.364px;">Comptabilité</span>
<span class="t" style="left:111.00px;top:774.00px;font-family:'Liberation Sans', sans-serif;font-size:26.2px;font-weight:400;color:#fff;letter-spacing:0.286px;">Dépenses</span>
<span class="t" style="left:111.00px;top:830.00px;font-family:'Liberation Sans', sans-serif;font-size:26.2px;font-weight:400;color:#fff;letter-spacing:0.344px;">Historique Caisse</span>
<span class="t" style="left:111.00px;top:888.50px;font-family:'Liberation Sans', sans-serif;font-size:26.2px;font-weight:400;color:#fff;letter-spacing:0.185px;">Remboursements</span>
<span class="t" style="left:75.05px;top:953.70px;font-family:'Liberation Sans', sans-serif;font-size:26.4px;font-weight:400;color:#fff;letter-spacing:0.000px;transform:scaleX(0.9459);transform-origin:0 0;">CATALOGUE</span>
<span class="t" style="left:112.00px;top:1011.00px;font-family:'Liberation Sans', sans-serif;font-size:26.2px;font-weight:400;color:#fff;letter-spacing:0.289px;">Catégories</span>
<span class="t" style="left:111.00px;top:1068.50px;font-family:'Liberation Sans', sans-serif;font-size:26.2px;font-weight:400;color:#fff;letter-spacing:0.386px;">Produits</span>
<span class="t" style="left:113.00px;top:1126.70px;font-family:'Liberation Sans', sans-serif;font-size:26.2px;font-weight:400;color:#fff;letter-spacing:0.294px;">Approvisionnements</span>
<span class="t" style="left:111.00px;top:1183.00px;font-family:'Liberation Sans', sans-serif;font-size:26.2px;font-weight:400;color:#fff;letter-spacing:0.367px;">Inventaire</span>
<span class="t" style="left:74.15px;top:1248.00px;font-family:'Liberation Sans', sans-serif;font-size:26.4px;font-weight:400;color:#fff;letter-spacing:0.000px;transform:scaleX(0.9260);transform-origin:0 0;">PARTENAIRES</span>
<span class="t" style="left:76.00px;top:1313.70px;font-family:'Liberation Sans', sans-serif;font-size:26.4px;font-weight:400;color:#fff;letter-spacing:0.000px;transform:scaleX(0.9631);transform-origin:0 0;">ADMINISTRATION</span>
<span class="t" style="left:111.00px;top:1370.70px;font-family:'Liberation Sans', sans-serif;font-size:26.2px;font-weight:400;color:#fff;letter-spacing:0.355px;">Utilisateurs</span>
<span class="t" style="left:112.00px;top:1429.00px;font-family:'Liberation Sans', sans-serif;font-size:26.2px;font-weight:400;color:#fff;letter-spacing:0.583px;">Configuration</span>
<span class="t" style="left:113.00px;top:1485.50px;font-family:'Liberation Sans', sans-serif;font-size:26.2px;font-weight:400;color:#fff;letter-spacing:0.150px;">Audit</span>
<span class="t" style="left:38.67px;top:1590.00px;font-family:'Liberation Sans', sans-serif;font-size:20px;font-weight:400;color:#1178c6;letter-spacing:0.000px;transform:scaleX(1.0296);transform-origin:0 0;">SO</span>
<span class="t" style="left:96.80px;top:1586.20px;font-family:'Liberation Sans', sans-serif;font-size:26.2px;font-weight:400;color:#fff;letter-spacing:0.142px;-webkit-text-stroke:0.9px #fff">Said Ouattara</span>
<span class="t" style="left:653.80px;top:80.90px;font-family:'Liberation Sans', sans-serif;font-size:26.4px;font-weight:400;color:#5f7488;letter-spacing:0.067px;">Rechercher</span>
<span class="t" style="left:1038.07px;top:83.90px;font-family:'Liberation Sans', sans-serif;font-size:18.7px;font-weight:400;color:#5f7386;letter-spacing:0.000px;transform:scaleX(0.8273);transform-origin:0 0;-webkit-text-stroke:0.3px #5f7386">K</span>
<span class="t" style="left:2932.88px;top:83.70px;font-family:'Liberation Sans', sans-serif;font-size:22.6px;font-weight:400;color:#0070bc;letter-spacing:0.000px;transform:scaleX(0.9161);transform-origin:0 0;">SO</span>
<span class="t" style="left:500.03px;top:176.00px;font-family:'Liberation Sans', sans-serif;font-size:45.6px;font-weight:700;color:#050a14;letter-spacing:-0.821px;transform:scaleX(0.9657);transform-origin:0 0;">Journal d&#x27;audit</span>
<span class="t" style="left:500.60px;top:234.00px;font-family:'Liberation Sans', sans-serif;font-size:30.8px;font-weight:400;color:#5f7488;letter-spacing:0.045px;">Historique de toutes les actions. Cliquez sur l&#x27;icône pour voir les détails.</span>
<span class="t" style="left:565.80px;top:311.10px;font-family:'Liberation Sans', sans-serif;font-size:26.7px;font-weight:400;color:#5a6f82;letter-spacing:0.105px;">Filtrer par action...</span>
<span class="t" style="left:2620.50px;top:311.00px;font-family:'Liberation Sans', sans-serif;font-size:26.2px;font-weight:400;color:#0a0f1a;letter-spacing:0.389px;">Rafraîchir</span>
<span class="t" style="left:2843.50px;top:311.00px;font-family:'Liberation Sans', sans-serif;font-size:26.2px;font-weight:400;color:#0a0f1a;letter-spacing:0.457px;">Colonnes</span>
<span class="t" style="left:591.60px;top:416.00px;font-family:'Liberation Sans', sans-serif;font-size:22.4px;font-weight:400;color:#5a6e80;letter-spacing:0.920px;-webkit-text-stroke:0.65px #5a6e80">ACTION</span>
<span class="t" style="left:1039.00px;top:416.00px;font-family:'Liberation Sans', sans-serif;font-size:22.4px;font-weight:400;color:#5a6e80;letter-spacing:0.700px;-webkit-text-stroke:0.65px #5a6e80">UTILISATEUR</span>
<span class="t" style="left:1452.00px;top:416.00px;font-family:'Liberation Sans', sans-serif;font-size:22.4px;font-weight:400;color:#5a6e80;letter-spacing:0.650px;-webkit-text-stroke:0.65px #5a6e80">TABLE</span>
<span class="t" style="left:1738.00px;top:416.00px;font-family:'Liberation Sans', sans-serif;font-size:22.4px;font-weight:400;color:#5a6e80;letter-spacing:0.312px;-webkit-text-stroke:0.65px #5a6e80">ID ENREGISTREMENT</span>
<span class="t" style="left:2297.00px;top:416.00px;font-family:'Liberation Sans', sans-serif;font-size:22.4px;font-weight:400;color:#5a6e80;letter-spacing:0.433px;-webkit-text-stroke:0.65px #5a6e80">DATE</span>
<span class="t" style="left:2761.50px;top:416.00px;font-family:'Liberation Sans', sans-serif;font-size:22.4px;font-weight:400;color:#5a6e80;letter-spacing:0.750px;-webkit-text-stroke:0.65px #5a6e80">ACTIONS</span>
<span class="t" style="left:610.00px;top:501.00px;font-family:'Liberation Sans', sans-serif;font-size:23px;font-weight:400;color:#fff;letter-spacing:0.077px;-webkit-text-stroke:0.45px #fff">Création vente</span>
<span class="t" style="left:1043.00px;top:499.00px;font-family:'Liberation Sans', sans-serif;font-size:26.2px;font-weight:400;color:#0a0f1a;letter-spacing:-0.108px;">Said Ouattara</span>
<span class="t" style="left:1471.10px;top:501.00px;font-family:'Liberation Sans', sans-serif;font-size:23px;font-weight:400;color:#0f1d2e;letter-spacing:0.000px;-webkit-text-stroke:0.45px #0f1d2e">Ventes</span>
<span class="t" style="left:1743.50px;top:506.00px;font-family:'Liberation Mono', monospace;font-size:22px;font-weight:400;color:#0a0f1a;letter-spacing:-0.500px;">cmnhw8gl</span>
<span class="t" style="left:1848.40px;top:506.00px;font-family:'Liberation Mono', monospace;font-size:22px;font-weight:400;color:#0a0f1a;letter-spacing:-2.950px;">...</span>
<span class="t" style="left:2301.00px;top:499.00px;font-family:'Liberation Sans', sans-serif;font-size:26.2px;font-weight:400;color:#0a0f1a;letter-spacing:0.176px;">2 avr. 2026, 19:54</span>
<span class="t" style="left:610.00px;top:594.60px;font-family:'Liberation Sans', sans-serif;font-size:23px;font-weight:400;color:#fff;letter-spacing:0.077px;-webkit-text-stroke:0.45px #fff">Création vente</span>
<span class="t" style="left:1043.00px;top:592.60px;font-family:'Liberation Sans', sans-serif;font-size:26.2px;font-weight:400;color:#0a0f1a;letter-spacing:-0.108px;">Said Ouattara</span>
<span class="t" style="left:1471.10px;top:594.60px;font-family:'Liberation Sans', sans-serif;font-size:23px;font-weight:400;color:#0f1d2e;letter-spacing:0.000px;-webkit-text-stroke:0.45px #0f1d2e">Ventes</span>
<span class="t" style="left:1743.50px;top:599.60px;font-family:'Liberation Mono', monospace;font-size:22px;font-weight:400;color:#0a0f1a;letter-spacing:-0.357px;">cmnhw7pf</span>
<span class="t" style="left:1848.40px;top:599.60px;font-family:'Liberation Mono', monospace;font-size:22px;font-weight:400;color:#0a0f1a;letter-spacing:-2.950px;">...</span>
<span class="t" style="left:2301.00px;top:592.60px;font-family:'Liberation Sans', sans-serif;font-size:26.2px;font-weight:400;color:#0a0f1a;letter-spacing:0.176px;">2 avr. 2026, 19:53</span>
<span class="t" style="left:608.80px;top:688.20px;font-family:'Liberation Sans', sans-serif;font-size:23px;font-weight:400;color:#0f1d2e;letter-spacing:0.468px;-webkit-text-stroke:0.45px #0f1d2e">Modification produit</span>
<span class="t" style="left:1043.00px;top:686.20px;font-family:'Liberation Sans', sans-serif;font-size:26.2px;font-weight:400;color:#0a0f1a;letter-spacing:-0.108px;">Said Ouattara</span>
<span class="t" style="left:1469.60px;top:688.20px;font-family:'Liberation Sans', sans-serif;font-size:23px;font-weight:400;color:#0f1d2e;letter-spacing:0.229px;-webkit-text-stroke:0.45px #0f1d2e">Produits</span>
<span class="t" style="left:1743.50px;top:693.20px;font-family:'Liberation Mono', monospace;font-size:22px;font-weight:400;color:#0a0f1a;letter-spacing:-0.357px;">cmmwciqb</span>
<span class="t" style="left:1848.40px;top:693.20px;font-family:'Liberation Mono', monospace;font-size:22px;font-weight:400;color:#0a0f1a;letter-spacing:-2.950px;">...</span>
<span class="t" style="left:2301.00px;top:686.20px;font-family:'Liberation Sans', sans-serif;font-size:26.2px;font-weight:400;color:#0a0f1a;letter-spacing:0.176px;">2 avr. 2026, 19:48</span>
<span class="t" style="left:608.80px;top:781.80px;font-family:'Liberation Sans', sans-serif;font-size:23px;font-weight:400;color:#0f1d2e;letter-spacing:0.468px;-webkit-text-stroke:0.45px #0f1d2e">Modification produit</span>
<span class="t" style="left:1043.00px;top:779.80px;font-family:'Liberation Sans', sans-serif;font-size:26.2px;font-weight:400;color:#0a0f1a;letter-spacing:-0.108px;">Said Ouattara</span>
<span class="t" style="left:1469.60px;top:781.80px;font-family:'Liberation Sans', sans-serif;font-size:23px;font-weight:400;color:#0f1d2e;letter-spacing:0.229px;-webkit-text-stroke:0.45px #0f1d2e">Produits</span>
<span class="t" style="left:1743.50px;top:786.80px;font-family:'Liberation Mono', monospace;font-size:22px;font-weight:400;color:#0a0f1a;letter-spacing:-0.357px;">cmmwciqb</span>
<span class="t" style="left:1848.40px;top:786.80px;font-family:'Liberation Mono', monospace;font-size:22px;font-weight:400;color:#0a0f1a;letter-spacing:-2.950px;">...</span>
<span class="t" style="left:2301.00px;top:779.80px;font-family:'Liberation Sans', sans-serif;font-size:26.2px;font-weight:400;color:#0a0f1a;letter-spacing:0.176px;">2 avr. 2026, 19:48</span>
<span class="t" style="left:608.80px;top:875.40px;font-family:'Liberation Sans', sans-serif;font-size:23px;font-weight:400;color:#0f1d2e;letter-spacing:0.468px;-webkit-text-stroke:0.45px #0f1d2e">Modification produit</span>
<span class="t" style="left:1043.00px;top:873.40px;font-family:'Liberation Sans', sans-serif;font-size:26.2px;font-weight:400;color:#0a0f1a;letter-spacing:-0.108px;">Said Ouattara</span>
<span class="t" style="left:1469.60px;top:875.40px;font-family:'Liberation Sans', sans-serif;font-size:23px;font-weight:400;color:#0f1d2e;letter-spacing:0.229px;-webkit-text-stroke:0.45px #0f1d2e">Produits</span>
<span class="t" style="left:1743.50px;top:880.40px;font-family:'Liberation Mono', monospace;font-size:22px;font-weight:400;color:#0a0f1a;letter-spacing:-0.357px;">cmmwciqb</span>
<span class="t" style="left:1848.40px;top:880.40px;font-family:'Liberation Mono', monospace;font-size:22px;font-weight:400;color:#0a0f1a;letter-spacing:-2.950px;">...</span>
<span class="t" style="left:2301.00px;top:873.40px;font-family:'Liberation Sans', sans-serif;font-size:26.2px;font-weight:400;color:#0a0f1a;letter-spacing:0.235px;">2 avr. 2026, 19:47</span>
<span class="t" style="left:608.80px;top:969.00px;font-family:'Liberation Sans', sans-serif;font-size:23px;font-weight:400;color:#0f1d2e;letter-spacing:0.468px;-webkit-text-stroke:0.45px #0f1d2e">Modification produit</span>
<span class="t" style="left:1043.00px;top:967.00px;font-family:'Liberation Sans', sans-serif;font-size:26.2px;font-weight:400;color:#0a0f1a;letter-spacing:-0.108px;">Said Ouattara</span>
<span class="t" style="left:1469.60px;top:969.00px;font-family:'Liberation Sans', sans-serif;font-size:23px;font-weight:400;color:#0f1d2e;letter-spacing:0.229px;-webkit-text-stroke:0.45px #0f1d2e">Produits</span>
<span class="t" style="left:1743.50px;top:974.00px;font-family:'Liberation Mono', monospace;font-size:22px;font-weight:400;color:#0a0f1a;letter-spacing:-0.357px;">cmmwciqb</span>
<span class="t" style="left:1848.40px;top:974.00px;font-family:'Liberation Mono', monospace;font-size:22px;font-weight:400;color:#0a0f1a;letter-spacing:-2.950px;">...</span>
<span class="t" style="left:2301.00px;top:967.00px;font-family:'Liberation Sans', sans-serif;font-size:26.2px;font-weight:400;color:#0a0f1a;letter-spacing:0.235px;">2 avr. 2026, 19:47</span>
<span class="t" style="left:608.80px;top:1062.60px;font-family:'Liberation Sans', sans-serif;font-size:23px;font-weight:400;color:#0f1d2e;letter-spacing:0.468px;-webkit-text-stroke:0.45px #0f1d2e">Modification produit</span>
<span class="t" style="left:1043.00px;top:1060.60px;font-family:'Liberation Sans', sans-serif;font-size:26.2px;font-weight:400;color:#0a0f1a;letter-spacing:-0.108px;">Said Ouattara</span>
<span class="t" style="left:1469.60px;top:1062.60px;font-family:'Liberation Sans', sans-serif;font-size:23px;font-weight:400;color:#0f1d2e;letter-spacing:0.229px;-webkit-text-stroke:0.45px #0f1d2e">Produits</span>
<span class="t" style="left:1743.50px;top:1067.60px;font-family:'Liberation Mono', monospace;font-size:22px;font-weight:400;color:#0a0f1a;letter-spacing:-0.357px;">cmmwciqb</span>
<span class="t" style="left:1848.40px;top:1067.60px;font-family:'Liberation Mono', monospace;font-size:22px;font-weight:400;color:#0a0f1a;letter-spacing:-2.950px;">...</span>
<span class="t" style="left:2301.00px;top:1060.60px;font-family:'Liberation Sans', sans-serif;font-size:26.2px;font-weight:400;color:#0a0f1a;letter-spacing:0.176px;">2 avr. 2026, 19:46</span>
<span class="t" style="left:608.80px;top:1156.20px;font-family:'Liberation Sans', sans-serif;font-size:23px;font-weight:400;color:#0f1d2e;letter-spacing:0.468px;-webkit-text-stroke:0.45px #0f1d2e">Modification produit</span>
<span class="t" style="left:1043.00px;top:1154.20px;font-family:'Liberation Sans', sans-serif;font-size:26.2px;font-weight:400;color:#0a0f1a;letter-spacing:-0.108px;">Said Ouattara</span>
<span class="t" style="left:1469.60px;top:1156.20px;font-family:'Liberation Sans', sans-serif;font-size:23px;font-weight:400;color:#0f1d2e;letter-spacing:0.229px;-webkit-text-stroke:0.45px #0f1d2e">Produits</span>
<span class="t" style="left:1743.50px;top:1161.20px;font-family:'Liberation Mono', monospace;font-size:22px;font-weight:400;color:#0a0f1a;letter-spacing:-0.357px;">cmmwciqb</span>
<span class="t" style="left:1848.40px;top:1161.20px;font-family:'Liberation Mono', monospace;font-size:22px;font-weight:400;color:#0a0f1a;letter-spacing:-2.950px;">...</span>
<span class="t" style="left:2301.00px;top:1154.20px;font-family:'Liberation Sans', sans-serif;font-size:26.2px;font-weight:400;color:#0a0f1a;letter-spacing:0.176px;">2 avr. 2026, 19:46</span>
<span class="t" style="left:608.80px;top:1249.80px;font-family:'Liberation Sans', sans-serif;font-size:23px;font-weight:400;color:#0f1d2e;letter-spacing:0.468px;-webkit-text-stroke:0.45px #0f1d2e">Modification produit</span>
<span class="t" style="left:1043.00px;top:1247.80px;font-family:'Liberation Sans', sans-serif;font-size:26.2px;font-weight:400;color:#0a0f1a;letter-spacing:-0.108px;">Said Ouattara</span>
<span class="t" style="left:1469.60px;top:1249.80px;font-family:'Liberation Sans', sans-serif;font-size:23px;font-weight:400;color:#0f1d2e;letter-spacing:0.229px;-webkit-text-stroke:0.45px #0f1d2e">Produits</span>
<span class="t" style="left:1743.50px;top:1254.80px;font-family:'Liberation Mono', monospace;font-size:22px;font-weight:400;color:#0a0f1a;letter-spacing:-0.357px;">cmmwciqb</span>
<span class="t" style="left:1848.40px;top:1254.80px;font-family:'Liberation Mono', monospace;font-size:22px;font-weight:400;color:#0a0f1a;letter-spacing:-2.950px;">...</span>
<span class="t" style="left:2301.00px;top:1247.80px;font-family:'Liberation Sans', sans-serif;font-size:26.2px;font-weight:400;color:#0a0f1a;letter-spacing:0.176px;">2 avr. 2026, 19:45</span>
<span class="t" style="left:608.80px;top:1343.40px;font-family:'Liberation Sans', sans-serif;font-size:23px;font-weight:400;color:#0f1d2e;letter-spacing:0.468px;-webkit-text-stroke:0.45px #0f1d2e">Modification produit</span>
<span class="t" style="left:1043.00px;top:1341.40px;font-family:'Liberation Sans', sans-serif;font-size:26.2px;font-weight:400;color:#0a0f1a;letter-spacing:-0.108px;">Said Ouattara</span>
<span class="t" style="left:1469.60px;top:1343.40px;font-family:'Liberation Sans', sans-serif;font-size:23px;font-weight:400;color:#0f1d2e;letter-spacing:0.229px;-webkit-text-stroke:0.45px #0f1d2e">Produits</span>
<span class="t" style="left:1743.50px;top:1348.40px;font-family:'Liberation Mono', monospace;font-size:22px;font-weight:400;color:#0a0f1a;letter-spacing:-0.357px;">cmmwciqb</span>
<span class="t" style="left:1848.40px;top:1348.40px;font-family:'Liberation Mono', monospace;font-size:22px;font-weight:400;color:#0a0f1a;letter-spacing:-2.950px;">...</span>
<span class="t" style="left:2301.00px;top:1341.40px;font-family:'Liberation Sans', sans-serif;font-size:26.2px;font-weight:400;color:#0a0f1a;letter-spacing:0.176px;">2 avr. 2026, 19:45</span>
<span class="t" style="left:608.80px;top:1437.00px;font-family:'Liberation Sans', sans-serif;font-size:23px;font-weight:400;color:#0f1d2e;letter-spacing:0.468px;-webkit-text-stroke:0.45px #0f1d2e">Modification produit</span>
<span class="t" style="left:1043.00px;top:1435.00px;font-family:'Liberation Sans', sans-serif;font-size:26.2px;font-weight:400;color:#0a0f1a;letter-spacing:-0.108px;">Said Ouattara</span>
<span class="t" style="left:1469.60px;top:1437.00px;font-family:'Liberation Sans', sans-serif;font-size:23px;font-weight:400;color:#0f1d2e;letter-spacing:0.229px;-webkit-text-stroke:0.45px #0f1d2e">Produits</span>
<span class="t" style="left:1743.50px;top:1442.00px;font-family:'Liberation Mono', monospace;font-size:22px;font-weight:400;color:#0a0f1a;letter-spacing:-0.357px;">cmmwciqb</span>
<span class="t" style="left:1848.40px;top:1442.00px;font-family:'Liberation Mono', monospace;font-size:22px;font-weight:400;color:#0a0f1a;letter-spacing:-2.950px;">...</span>
<span class="t" style="left:2301.00px;top:1435.00px;font-family:'Liberation Sans', sans-serif;font-size:26.2px;font-weight:400;color:#0a0f1a;letter-spacing:0.176px;">2 avr. 2026, 19:44</span>
<span class="t" style="left:608.80px;top:1530.60px;font-family:'Liberation Sans', sans-serif;font-size:23px;font-weight:400;color:#0f1d2e;letter-spacing:0.468px;-webkit-text-stroke:0.45px #0f1d2e">Modification produit</span>
<span class="t" style="left:1043.00px;top:1528.60px;font-family:'Liberation Sans', sans-serif;font-size:26.2px;font-weight:400;color:#0a0f1a;letter-spacing:-0.108px;">Said Ouattara</span>
<span class="t" style="left:1469.60px;top:1530.60px;font-family:'Liberation Sans', sans-serif;font-size:23px;font-weight:400;color:#0f1d2e;letter-spacing:0.229px;-webkit-text-stroke:0.45px #0f1d2e">Produits</span>
<span class="t" style="left:1743.50px;top:1535.60px;font-family:'Liberation Mono', monospace;font-size:22px;font-weight:400;color:#0a0f1a;letter-spacing:-0.357px;">cmmwciqb</span>
<span class="t" style="left:1848.40px;top:1535.60px;font-family:'Liberation Mono', monospace;font-size:22px;font-weight:400;color:#0a0f1a;letter-spacing:-2.950px;">...</span>
<span class="t" style="left:2301.00px;top:1528.60px;font-family:'Liberation Sans', sans-serif;font-size:26.2px;font-weight:400;color:#0a0f1a;letter-spacing:0.176px;">2 avr. 2026, 19:44</span>
<span class="t" style="left:608.80px;top:1624.20px;font-family:'Liberation Sans', sans-serif;font-size:23px;font-weight:400;color:#0f1d2e;letter-spacing:0.468px;-webkit-text-stroke:0.45px #0f1d2e">Modification produit</span>
<span class="t" style="left:1043.00px;top:1622.20px;font-family:'Liberation Sans', sans-serif;font-size:26.2px;font-weight:400;color:#0a0f1a;letter-spacing:-0.108px;">Said Ouattara</span>
<span class="t" style="left:1469.60px;top:1624.20px;font-family:'Liberation Sans', sans-serif;font-size:23px;font-weight:400;color:#0f1d2e;letter-spacing:0.229px;-webkit-text-stroke:0.45px #0f1d2e">Produits</span>
<span class="t" style="left:1743.50px;top:1629.20px;font-family:'Liberation Mono', monospace;font-size:22px;font-weight:400;color:#0a0f1a;letter-spacing:-0.357px;">cmmwciqb</span>
<span class="t" style="left:1848.40px;top:1629.20px;font-family:'Liberation Mono', monospace;font-size:22px;font-weight:400;color:#0a0f1a;letter-spacing:-2.950px;">...</span>
<span class="t" style="left:2301.00px;top:1622.20px;font-family:'Liberation Sans', sans-serif;font-size:26.2px;font-weight:400;color:#0a0f1a;letter-spacing:0.176px;">2 avr. 2026, 19:44</span>
<span class="t" style="left:1410.60px;top:21.00px;font-family:'Liberation Sans', sans-serif;font-size:23px;font-weight:400;color:#fff;letter-spacing:-0.011px;">Connecté en tant que</span>
<span class="t" style="left:1636.60px;top:20.00px;font-family:'Liberation Sans', sans-serif;font-size:23px;font-weight:400;color:#fff;letter-spacing:-0.083px;-webkit-text-stroke:0.9px #fff">Said Ouattara</span>
<span class="t" style="left:1785.70px;top:21.00px;font-family:'Liberation Sans', sans-serif;font-size:23px;font-weight:400;color:rgba(255,255,255,0.72);letter-spacing:-0.270px;">— Nova bleu</span>
<span class="t" style="left:1981.50px;top:22.00px;font-family:'Liberation Sans', sans-serif;font-size:22.2px;font-weight:400;color:#fff;letter-spacing:0.417px;-webkit-text-stroke:0.6px #fff">Quitter</span>
</body></html>
